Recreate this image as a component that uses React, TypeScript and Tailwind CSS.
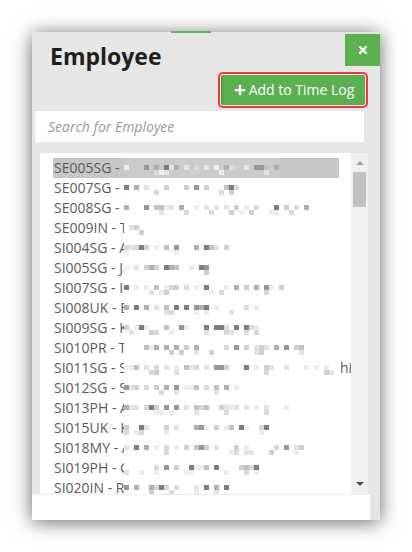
import React from "react";
import { FaPlus, FaTimes } from "react-icons/fa";

type Row = { prefix: string; end: number; tail?: string };

const rows: Row[] = [
  { prefix: "SE005SG - K", end: 280 },
  { prefix: "SE007SG - S", end: 243 },
  { prefix: "SE008SG - N", end: 317 },
  { prefix: "SE009IN - T", end: 145 },
  { prefix: "SI004SG - A", end: 233 },
  { prefix: "SI005SG - Ja", end: 213 },
  { prefix: "SI007SG - Is", end: 285 },
  { prefix: "SI008UK - B", end: 267 },
  { prefix: "SI009SG - K", end: 277 },
  { prefix: "SI010PR - Th", end: 305 },
  { prefix: "SI011SG - S", end: 338, tail: "hi" },
  { prefix: "SI012SG - S", end: 242 },
  { prefix: "SI013PH - A", end: 290 },
  { prefix: "SI015UK - K", end: 270 },
  { prefix: "SI018MY - A", end: 305 },
  { prefix: "SI019PH - C", end: 277 },
  { prefix: "SI020IN - Re", end: 237 },
];

function rng(seed: number) {
  let s = seed * 9301 + 49297;
  return () => {
    s = (s * 9301 + 49297) % 233280;
    return s / 233280;
  };
}

const palette = ["#ededed", "#e3e3e3", "#d9d9d9", "#cfcfcf", "#c2c2c2", "#b0b0b0", "#989898", "#7e7e7e"];

function Mosaic({ width, seed, highlighted }: { width: number; seed: number; highlighted: boolean }) {
  const r = rng(seed);
  const cols = Math.max(1, Math.floor(width / 5));
  const cells: React.ReactNode[] = [];
  for (let i = 0; i < cols; i++) {
    const gap = i % 2 === 1 ? r() < 0.75 : r() < 0.2;
    const topColor = gap ? "transparent" : palette[Math.floor(Math.pow(r(), 1.1) * palette.length)];
    const botShow = r() < 0.18;
    const botColor = botShow ? palette[Math.floor(r() * 4)] : "transparent";
    cells.push(
      <div key={i} className="flex flex-col w-[5px]">
        <div className="h-[7px]" />
        <div className="h-[5px]" style={{ backgroundColor: topColor }} />
        <div className="h-[5px]" style={{ backgroundColor: botColor }} />
      </div>
    );
  }
  return (
    <div
      className={`absolute top-0 left-[71px] h-[20px] flex ${highlighted ? "bg-[#cbcbcb]" : "bg-white"}`}
      style={{ width }}
    >
      {cells}
    </div>
  );
}

export default function App() {
  return (
    <div className="min-h-[552px] w-[412px] bg-white pt-8 pl-8 overflow-hidden" style={{ fontFamily: '"Open Sans", "Noto Sans", sans-serif' }}>
      <div className="relative w-[348px] h-[488px] bg-[#e6e6e6] shadow-[0_2px_18px_rgba(0,0,0,0.6)] flex flex-col">
        <div className="absolute -top-px left-[139px] w-[40px] h-[2px] bg-[#5cb85c]" />
        {/* header */}
        <div className="flex items-start justify-between h-[40px]">
          <h1 className="pl-[18px] pt-[9px] text-[23px] leading-[30px] font-bold text-[#1e1e1e]">Employee</h1>
          <button className="mt-[2px] w-[35px] h-[32px] bg-[#5cb050] flex items-center justify-center text-white">
            <FaTimes size={12} />
          </button>
        </div>
        {/* add button row */}
        <div className="flex justify-end pr-[12px]">
          <div className="border-2 border-[#ee3a40] rounded-[5px] p-px">
            <button className="w-[144px] h-[30px] bg-[#5cb050] border-l-2 border-[#4f9a45] rounded-[2px] flex items-center justify-center gap-[3px] text-white text-[14px] leading-none">
              <FaPlus size={12} />
              <span>Add to Time Log</span>
            </button>
          </div>
        </div>
        {/* search */}
        <div className="pl-[3px] mt-[3px]">
          <div className="w-[329px] h-[31px] bg-white flex items-center pl-[13px]">
            <span className="italic text-[14px] text-[#9a9a9a]">Search for Employee</span>
          </div>
        </div>
        {/* list */}
        <div className="ml-[8px] mt-[11px] w-[328px] h-[341px] bg-white flex">
          <div className="flex-1 overflow-hidden pl-[13px] pt-[5px]">
            {rows.map((row, i) => (
              <div
                key={i}
                className={`relative w-[286px] h-[20px] leading-[20px] text-[14px] text-[#5a5a5a] whitespace-nowrap ${i === 0 ? "bg-[#c6c6c6]" : ""}`}
              >
                <span className="pl-px">{row.prefix}</span>
                <Mosaic width={row.end - 124} seed={i + 7} highlighted={i === 0} />
                {row.tail && <span className="absolute top-0 left-[287px]">{row.tail}</span>}
              </div>
            ))}
          </div>
          <div className="w-[17px] h-full bg-[#f0f0f0] flex flex-col items-center">
            <div className="h-[19px] flex items-center justify-center">
              <div className="w-0 h-0 border-l-[4px] border-r-[4px] border-b-[4px] border-l-transparent border-r-transparent border-b-[#a3a3a3]" />
            </div>
            <div className="w-[13px] h-[35px] bg-[#c1c1c1]" />
            <div className="flex-1" />
            <div className="h-[20px] flex items-start justify-center pt-[8px]">
              <div className="w-0 h-0 border-l-[4px] border-r-[4px] border-t-[4px] border-l-transparent border-r-transparent border-t-[#505050]" />
            </div>
          </div>
        </div>
        {/* bottom strip */}
        <div className="w-[338px] h-[26px] bg-white border-t border-[#eeeeee]" />
      </div>
    </div>
  );
}
